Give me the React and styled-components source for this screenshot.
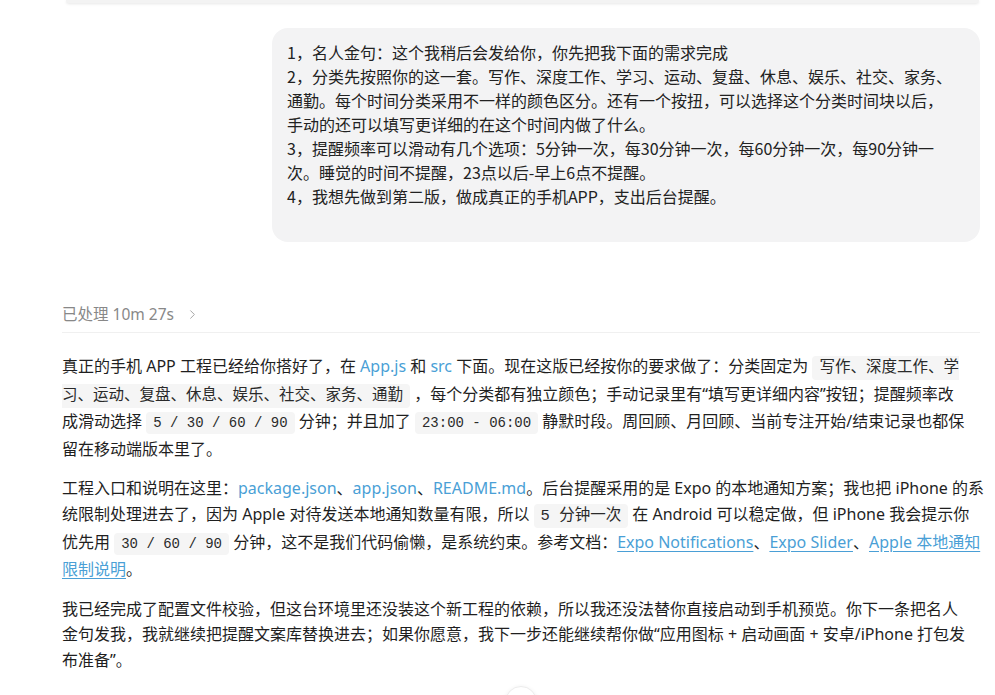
import React from 'react'
import styled, { createGlobalStyle } from 'styled-components'
import { ChevronRight, ArrowDown } from 'lucide-react'

const GlobalStyle = createGlobalStyle`
  html, body {
    margin: 0;
    padding: 0;
    background: #ffffff;
    overflow: hidden;
  }
  body {
    font-family: "Noto Sans", "Noto Sans CJK SC", sans-serif;
    color: #1f1f1f;
  }
`

const Page = styled.main`
  width: 995px;
  height: 695px;
  display: flex;
  flex-direction: column;
`

const PrevCard = styled.div`
  height: 3px;
  margin: 0 16px 0 66px;
  background: #f3f3f3;
  border-radius: 0 0 10px 10px;
  box-shadow: 0 1px 3px rgba(0, 0, 0, 0.1);
`

const UserRow = styled.div`
  display: flex;
  justify-content: flex-end;
  margin: 25px 15px 0 0;
`

const UserBubble = styled.div`
  width: 708px;
  box-sizing: border-box;
  padding: 12px 15px 34px;
  background: #f3f3f4;
  border-radius: 16px;
  font-family: "Noto Sans CJK SC", sans-serif;
  font-size: 16px;
  line-height: 24px;
  color: #222;
  white-space: pre-line;
`

const Meta = styled.div`
  display: flex;
  align-items: center;
  gap: 11px;
  margin: 61px 15px 0 62px;
  padding-bottom: 7px;
  border-bottom: 1px solid #f0f0f0;
  font-size: 15.5px;
  line-height: 22px;
  color: #888;
`

const Answer = styled.section`
  margin: 21px 15px 0 62px;
`

const Para = styled.p`
  margin: 0 0 14px;
  font-size: 16px;
  line-height: 25.6px;
  white-space: nowrap;
`

const Code = styled.code`
  font-family: "Liberation Mono", "Noto Sans CJK SC", monospace;
  font-size: ${p => (p.$cjk ? '15.5px' : '14px')};
  background: #f5f5f5;
  border-radius: 4px;
  padding: 3px 7px;
  color: #2a2a2a;
`

const FileLink = styled.a`
  color: #4a9fd6;
  text-decoration: none;
`

const DocLink = styled.a`
  color: #4a9fd6;
  text-decoration: underline;
  text-underline-offset: 3px;
`

const ScrollButton = styled.button`
  position: fixed;
  left: 505px;
  top: 686px;
  width: 32px;
  height: 32px;
  border-radius: 50%;
  border: 1px solid #ececec;
  background: #ffffff;
  box-shadow: 0 1px 4px rgba(0, 0, 0, 0.08);
  display: flex;
  align-items: center;
  justify-content: center;
  padding: 0;
  color: #666;
`

const userText = `1，名人金句：这个我稍后会发给你，你先把我下面的需求完成
2，分类先按照你的这一套。写作、深度工作、学习、运动、复盘、休息、娱乐、社交、家务、
通勤。每个时间分类采用不一样的颜色区分。还有一个按扭，可以选择这个分类时间块以后，
手动的还可以填写更详细的在这个时间内做了什么。
3，提醒频率可以滑动有几个选项：5分钟一次，每30分钟一次，每60分钟一次，每90分钟一
次。睡觉的时间不提醒，23点以后-早上6点不提醒。
4，我想先做到第二版，做成真正的手机APP，支出后台提醒。`

export default function App() {
  return (
    <>
      <GlobalStyle />
      <Page>
        <PrevCard />
        <UserRow>
          <UserBubble>{userText}</UserBubble>
        </UserRow>

        <Meta>
          <span>已处理 10m 27s</span>
          <ChevronRight size={15} strokeWidth={1.5} color="#a0a0a0" />
        </Meta>

        <Answer>
          <Para>
            真正的手机 APP 工程已经给你搭好了，在 <FileLink>App.js</FileLink> 和{' '}
            <FileLink>src</FileLink> 下面。现在这版已经按你的要求做了：分类固定为{' '}
            <Code $cjk>
              写作、深度工作、学
              <br />
              习、运动、复盘、休息、娱乐、社交、家务、通勤
            </Code>{' '}
            ，每个分类都有独立颜色；手动记录里有“填写更详细内容”按钮；提醒频率改
            <br />
            成滑动选择 <Code>5 / 30 / 60 / 90</Code> 分钟；并且加了{' '}
            <Code>23:00 - 06:00</Code> 静默时段。周回顾、月回顾、当前专注开始/结束记录也都保
            <br />
            留在移动端版本里了。
          </Para>
          <Para>
            工程入口和说明在这里：<FileLink>package.json</FileLink>、
            <FileLink>app.json</FileLink>、<FileLink>README.md</FileLink>
            。后台提醒采用的是 Expo 的本地通知方案；我也把 iPhone 的系
            <br />
            统限制处理进去了，因为 Apple 对待发送本地通知数量有限，所以{' '}
            <Code $cjk>5 分钟一次</Code> 在 Android 可以稳定做，但 iPhone 我会提示你
            <br />
            优先用 <Code>30 / 60 / 90</Code> 分钟，这不是我们代码偷懒，是系统约束。参考文档：
            <DocLink>Expo Notifications</DocLink>、<DocLink>Expo Slider</DocLink>、
            <DocLink>
              Apple 本地通知
              <br />
              限制说明
            </DocLink>
            。
          </Para>
          <Para>
            我已经完成了配置文件校验，但这台环境里还没装这个新工程的依赖，所以我还没法替你直接启动到手机预览。你下一条把名人
            <br />
            金句发我，我就继续把提醒文案库替换进去；如果你愿意，我下一步还能继续帮你做“应用图标 + 启动画面 + 安卓/iPhone 打包发
            <br />
            布准备”。
          </Para>
        </Answer>

        <ScrollButton>
          <ArrowDown size={16} strokeWidth={1.75} />
        </ScrollButton>
      </Page>
    </>
  )
}
